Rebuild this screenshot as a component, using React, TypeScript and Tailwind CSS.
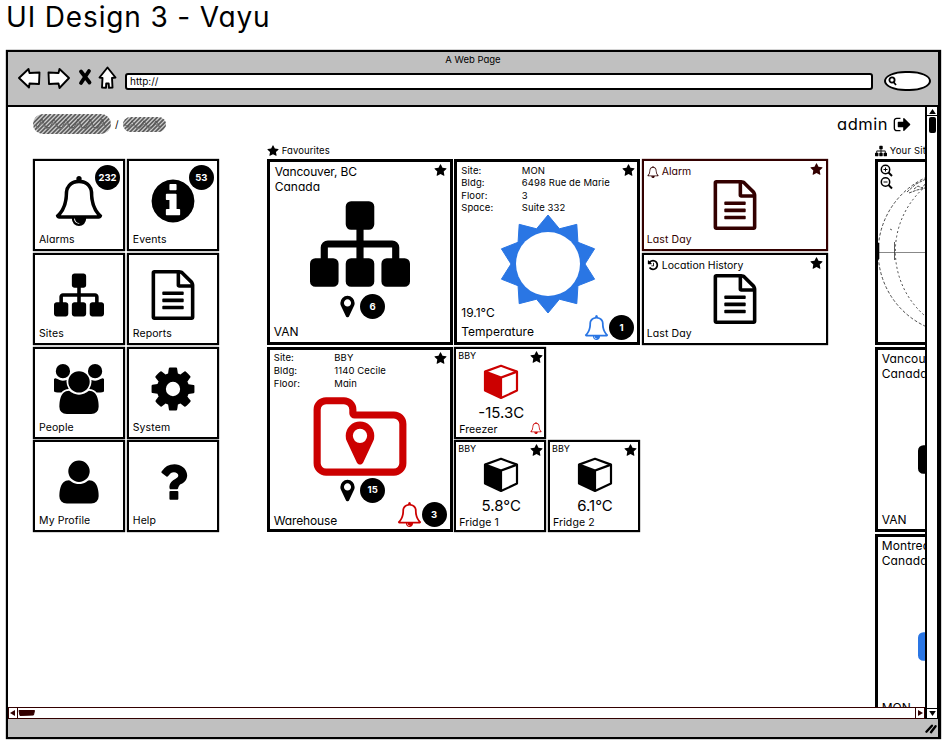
import React from "react";

const SITEMAP =
  "M1792 1248v320q0 40-28 68t-68 28h-320q-40 0-68-28t-28-68v-320q0-40 28-68t68-28h96v-192h-512v192h96q40 0 68 28t28 68v320q0 40-28 68t-68 28h-320q-40 0-68-28t-28-68v-320q0-40 28-68t68-28h96v-192h-512v192h96q40 0 68 28t28 68v320q0 40-28 68t-68 28h-320q-40 0-68-28t-28-68v-320q0-40 28-68t68-28h96v-192q0-52 38-90t90-38h512v-192h-96q-40 0-68-28t-28-68v-320q0-40 28-68t68-28h320q40 0 68 28t28 68v320q0 40-28 68t-68 28h-96v192h512q52 0 90 38t38 90v192h96q40 0 68 28t28 68z";
const INFO =
  "M1152 1376v-160q0-14-9-23t-23-9h-96v-512q0-14-9-23t-23-9h-320q-14 0-23 9t-9 23v160q0 14 9 23t23 9h96v320h-96q-14 0-23 9t-9 23v160q0 14 9 23t23 9h448q14 0 23-9t9-23zm-128-896v-160q0-14-9-23t-23-9h-192q-14 0-23 9t-9 23v160q0 14 9 23t23 9h192q14 0 23-9t9-23zm640 416q0 209-103 385.5t-279.5 279.5-385.5 103-385.5-103-279.5-279.5-103-385.5 103-385.5 279.5-279.5 385.5-103 385.5 103 279.5 279.5 103 385.5z";
const FILE =
  "M1596 380q28 28 48 76t20 88v1152q0 40-28 68t-68 28h-1344q-40 0-68-28t-28-68v-1600q0-40 28-68t68-28h896q40 0 88 20t76 48zm-444-244v376h376q-10-29-22-41l-313-313q-12-12-41-22zm384 1528v-1024h-416q-40 0-68-28t-28-68v-416h-768v1536h1280zm-1024-864q0-14 9-23t23-9h704q14 0 23 9t9 23v64q0 14-9 23t-23 9h-704q-14 0-23-9t-9-23v-64zm736 224q14 0 23 9t9 23v64q0 14-9 23t-23 9h-704q-14 0-23-9t-9-23v-64q0-14 9-23t23-9h704zm0 256q14 0 23 9t9 23v64q0 14-9 23t-23 9h-704q-14 0-23-9t-9-23v-64q0-14 9-23t23-9h704z";
const BELL =
  "M912 1696q0-16-16-16-59 0-101.5-42.5t-42.5-101.5q0-16-16-16t-16 16q0 73 51.5 124.5t124.5 51.5q16 0 16-16zm-666-288h1300q-266-300-266-832 0-51-24-105t-69-103-121.5-80.5-169.5-31.5-169.5 31.5-121.5 80.5-69 103-24 105q0 532-266 832zm1482 0q0 52-38 90t-90 38h-448q0 106-75 181t-181 75-181-75-75-181h-448q-52 0-90-38t-38-90q50-42 91-88t85-119.5 74.5-158.5 50-206 19.5-260q0-152 117-282.5t307-158.5q-8-19-8-39 0-40 28-68t68-28 68 28 28 68q0 20-8 39 190 28 307 158.5t117 282.5q0 139 19.5 260t50 206 74.5 158.5 85 119.5 91 88z";
const USERS =
  "M593 896q-162 5-265 128h-134q-82 0-138-40.5t-56-118.5q0-353 124-353 6 0 43.5 21t97.5 42.5 119 21.5q67 0 133-23-5 37-5 66 0 139 81 256zm1071 637q0 120-73 189.5t-194 69.5h-874q-121 0-194-69.5t-73-189.5q0-53 3.5-103.5t14-109 26.5-108.5 43-97.5 62-81 85.5-53.5 111.5-20q10 0 43 21.5t73 48 107 48 135 21.5 135-21.5 107-48 73-48 43-21.5q61 0 111.5 20t85.5 53.5 62 81 43 97.5 26.5 108.5 14 109 3.5 103.5zm-1024-1277q0 106-75 181t-181 75-181-75-75-181 75-181 181-75 181 75 75 181zm704 384q0 159-112.5 271.5t-271.5 112.5-271.5-112.5-112.5-271.5 112.5-271.5 271.5-112.5 271.5 112.5 112.5 271.5zm576 225q0 78-56 118.5t-138 40.5h-134q-103-123-265-128 81-117 81-256 0-29-5-66 66 23 133 23 59 0 119-21.5t97.5-42.5 43.5-21q124 0 124 353zm-128-609q0 106-75 181t-181 75-181-75-75-181 75-181 181-75 181 75 75 181z";
const USER =
  "M1600 1405q0 120-73 189.5t-194 69.5h-874q-121 0-194-69.5t-73-189.5q0-53 3.5-103.5t14-109 26.5-108.5 43-97.5 62-81 85.5-53.5 111.5-20q9 0 42 21.5t74.5 48 108 48 133.5 21.5 133.5-21.5 108-48 74.5-48 42-21.5q61 0 111.5 20t85.5 53.5 62 81 43 97.5 26.5 108.5 14 109 3.5 103.5zm-320-893q0 159-112.5 271.5t-271.5 112.5-271.5-112.5-112.5-271.5 112.5-271.5 271.5-112.5 271.5 112.5 112.5 271.5z";
const COG =
  "M1152 896q0-106-75-181t-181-75-181 75-75 181 75 181 181 75 181-75 75-181zm512-109v222q0 12-8 23t-20 13l-185 28q-19 54-39 91 35 50 107 138 10 12 10 25t-9 23q-27 37-99 108t-94 71q-12 0-26-9l-138-108q-44 23-91 38-16 136-29 186-7 28-36 28h-222q-14 0-24.5-8.5t-11.5-21.5l-28-184q-49-16-90-37l-141 107q-10 9-25 9-14 0-25-11-126-114-165-168-7-10-7-23 0-12 8-23 15-21 51-66.5t54-70.5q-27-50-41-99l-183-27q-13-2-21-12.5t-8-23.5v-222q0-12 8-23t19-13l186-28q14-46 39-92-40-57-107-138-10-12-10-24 0-10 9-23 26-36 98.5-107.5t94.5-71.5q13 0 26 10l138 107q44-23 91-38 16-136 29-186 7-28 36-28h222q14 0 24.5 8.5t11.5 21.5l28 184q49 16 90 37l142-107q9-9 24-9 13 0 25 10 129 119 165 170 7 8 7 22 0 12-8 23-15 21-51 66.5t-54 70.5q26 50 41 98l183 28q13 2 21 12.5t8 23.5z";
const QUESTION =
  "M1088 1256v240q0 16-12 28t-28 12h-240q-16 0-28-12t-12-28v-240q0-16 12-28t28-12h240q16 0 28 12t12 28zm316-600q0 54-15.5 101t-35 76.5-55 59.5-57.5 43.5-61 35.5q-41 23-68.5 65t-27.5 67q0 17-12 32.5t-28 15.5h-240q-15 0-25.5-18.5t-10.5-37.5v-45q0-83 65-156.5t143-108.5q59-27 84-56t25-76q0-42-46.5-74t-107.5-32q-65 0-108 29-35 25-107 115-13 16-31 16-12 0-25-8l-164-125q-13-10-15.5-25t5.5-28q160-266 464-266 80 0 161 31t146 83 106 127.5 41 158.5z";
const MARKER =
  "M1152 640q0-106-75-181t-181-75-181 75-75 181 75 181 181 75 181-75 75-181zm256 0q0 109-33 179l-364 774q-16 33-47.5 52t-67.5 19-67.5-19-46.5-52l-365-774q-33-70-33-179 0-212 150-362t362-150 362 150 150 362z";
const STAR =
  "M1728 647q0 22-26 48l-363 354 86 500q1 7 1 20 0 21-10.5 35.5t-30.5 14.5q-19 0-40-12l-449-236-449 236q-22 12-40 12-21 0-31.5-14.5t-10.5-35.5q0-6 2-20l86-500-364-354q-25-27-25-48 0-37 56-46l502-73 225-455q19-41 49-41t49 41l225 455 502 73q56 9 56 46z";
const FOLDER =
  "M1600 1312v-704q0-40-28-68t-68-28h-704q-40 0-68-28t-28-68v-64q0-40-28-68t-68-28h-320q-40 0-68 28t-28 68v960q0 40 28 68t68 28h1216q40 0 68-28t28-68zm128-704v704q0 92-66 158t-158 66h-1216q-92 0-158-66t-66-158v-960q0-92 66-158t158-66h320q92 0 158 66t66 158v32h672q92 0 158 66t66 158z";
const SIGNOUT =
  "M704 1440q0 4 1 20t.5 26.5-3 23.5-10 19.5-20.5 6.5h-320q-119 0-203.5-84.5t-84.5-203.5v-704q0-119 84.5-203.5t203.5-84.5h320q13 0 22.5 9.5t9.5 22.5q0 4 1 20t.5 26.5-3 23.5-10 19.5-20.5 6.5h-320q-66 0-113 47t-47 113v704q0 66 47 113t113 47h312l11.5 1 11.5 3 8 5.5 7 9 2 13.5zm928-544q0 26-19 45l-544 544q-19 19-45 19t-45-19-19-45v-288h-448q-26 0-45-19t-19-45v-384q0-26 19-45t45-19h448v-288q0-26 19-45t45-19 45 19l544 544q19 19 19 45z";
const HISTORY =
  "M1664 896q0 156-61 298t-164 245-245 164-298 61q-172 0-327-72.5t-264-204.5q-7-10-6.5-22.5t8.5-20.5l137-138q10-9 25-9 16 2 23 12 73 95 179 147t225 52q104 0 198.5-40.5t163.5-109.5 109.5-163.5 40.5-198.5-40.5-198.5-109.5-163.5-163.5-109.5-198.5-40.5q-98 0-188 35.5t-160 101.5l137 138q31 30 14 69-17 40-59 40h-448q-26 0-45-19t-19-45v-448q0-42 40-59 39-17 69 14l130 129q107-101 244.5-156.5t284.5-55.5q156 0 298 61t245 164 164 245 61 298zm-640-288v448q0 14-9 23t-23 9h-320q-14 0-23-9t-9-23v-64q0-14 9-23t23-9h224v-352q0-14 9-23t23-9h64q14 0 23 9t9 23z";

function Icon({ d, className, box = "0 0 1792 1792" }: { d: string; className: string; box?: string }) {
  return (
    <svg viewBox={box} className={`shrink-0 ${className}`} fill="currentColor">
      <path d={d} />
    </svg>
  );
}

function Badge({ children, className = "" }: { children: React.ReactNode; className?: string }) {
  return (
    <span
      className={`flex size-[25px] shrink-0 items-center justify-center rounded-full bg-black text-[9.5px] leading-none font-bold text-white ${className}`}
    >
      {children}
    </span>
  );
}

function CornerStar({ className = "top-[2px] right-[3px]" }: { className?: string }) {
  return <Icon d={STAR} className={`absolute size-[13px] ${className}`} />;
}

function MenuTile({ d, label, badge, box }: { d: string; label: string; badge?: string; box?: string }) {
  return (
    <button className="relative flex flex-col items-center border-[2px] border-black pt-[15px] shadow-[0_0_1px_#000]">
      <Icon d={d} box={box} className="size-[50px]" />
      <span className="mt-[6px] w-full pl-[4px] text-left text-[10.5px] leading-[16px] tracking-[0.1px]">{label}</span>
      {badge && <Badge className="absolute top-[4px] right-[3px]">{badge}</Badge>}
    </button>
  );
}

function Cube() {
  return (
    <svg viewBox="0 0 36 36" className="h-[36px] w-[36px]" fill="none" stroke="currentColor">
      <path d="M18 1.800 34 7.600v19L18 34 2 26.600V7.600Z" strokeWidth="2.200" strokeLinejoin="round" />
      <path d="M2 7.600 18 13.600 34 7.600M18 13.600V34" strokeWidth="2.200" />
      <path d="M2 7.600 18 13.600V34L2 26.600Z" fill="currentColor" stroke="none" />
    </svg>
  );
}

function FridgeTile({
  label,
  value,
  cube = "text-black",
  alarm,
  className = "",
}: {
  label: string;
  value: string;
  cube?: string;
  alarm?: boolean;
  className?: string;
}) {
  return (
    <article className={`relative flex flex-col items-center border-[2px] border-black shadow-[0_0_1px_#000] ${className}`}>
      <span className="mt-px w-full pl-[2px] text-[9px] leading-[12px]">BBY</span>
      <div className={`mt-[2px] ml-[2px] ${cube}`}>
        <Cube />
      </div>
      <span className="mt-[4px] ml-[2px] text-[15px] leading-[18px]">{value}</span>
      <span className="mt-px w-full pl-[3px] text-[10.5px] leading-[14px] tracking-[0.1px]">{label}</span>
      {alarm && <Icon d={BELL} className="absolute right-[2px] bottom-[3px] size-[12px] text-[#c00]" />}
      <CornerStar className="top-[2px] right-[1px]" />
    </article>
  );
}

function Details({ rows, pitch }: { rows: string[][]; pitch: string }) {
  return (
    <dl className={`text-[9.5px] tracking-[0.1px] ${pitch}`}>
      {rows.map(([k, v]) => (
        <div key={k} className="flex">
          <dt className="w-[60.500px]">{k}</dt>
          <dd>{v}</dd>
        </div>
      ))}
    </dl>
  );
}

function ReportTile({ title, d, color }: { title: string; d: string; color: string }) {
  return (
    <article className={`relative col-span-2 border-[2px] shadow-[0_0_1px_currentColor] ${color}`}>
      <header className="flex items-center gap-[3px] pt-[3px] pl-[3px] text-[10.500px] leading-[15px]">
        <Icon d={d} className="size-[12px]" />
        {title}
      </header>
      <div className="mt-px flex justify-center">
        <Icon d={FILE} className="size-[50px]" />
      </div>
      <span className="absolute bottom-[1px] left-[3px] text-[10.500px] leading-[16px] tracking-[0.1px]">Last Day</span>
      <CornerStar />
    </article>
  );
}

function Sun() {
  const pts = Array.from({ length: 20 }, (_, i) => {
    const a = (i * Math.PI) / 10;
    const r = i % 2 ? 37 : 49;
    return `${50 + r * Math.sin(a)},${50 - r * Math.cos(a)}`;
  }).join(" ");
  return (
    <svg viewBox="0 0 100 100" className="ml-px size-[100px]">
      <polygon points={pts} fill="#2a76e4" stroke="#2a76e4" strokeWidth="1" strokeLinejoin="round" />
      <circle cx="50" cy="50" r="32" fill="#fff" />
    </svg>
  );
}

function NavIcons() {
  return (
    <svg viewBox="17.500 66 102 24" className="h-[24px] w-[102px]" fill="#fff" stroke="#000" strokeWidth="1.900" strokeLinejoin="round">
      <path d="M18.500 78 28 69l1 4 10-.5-.5 11.500-9.500-.5-.5 4Z" />
      <path d="M68.500 78 59 69l-1 4-10-.5.5 11.500L58 83.500l1 4.500Z" />
      <path d="M80.500 71.500 89 82.500M88.500 71 80.500 83" strokeWidth="3.800" strokeLinecap="round" />
      <path d="M107 67.500 115 77.500l-3.500.5.5 9.500-3.500.3-.3-4.300h-2.500l-.2 4.300-4-.3.5-9.500-3-.5Z" />
    </svg>
  );
}

function Scribble({ w, h }: { w: number; h: number }) {
  const n = Math.ceil((w + h) / 4.2);
  const mid = h / 2;
  const zig = (dy: number, amp: number) => {
    let p = `M2 ${mid}`;
    for (let x = 5; x < w - 2; x += 4) p += ` L${x} ${mid + dy + (x % 3 === 0 ? -amp : amp * 0.7)}`;
    return p;
  };
  return (
    <svg viewBox={`0 0 ${w} ${h}`} width={w} height={h} className="shrink-0 rounded-full bg-[#cfcfcf]">
      {Array.from({ length: n }, (_, i) => (
        <path key={i} d={`M${i * 4.2 - h} ${h + 1}L${i * 4.2 + 1} 0`} stroke="#5a5a5a" strokeWidth="1.700" />
      ))}
      <path d={zig(0, h / 4)} fill="none" stroke="#555" strokeWidth=".9" />
      <path d={zig(2, h / 6)} fill="none" stroke="#777" strokeWidth=".9" />
    </svg>
  );
}

function MapTile() {
  return (
    <div className="h-[185.750px] w-[185.750px] border-[3px] border-black">
      <svg viewBox="878 162 180 180" className="size-[180px]" fill="none" stroke="#333">
        <path d="M878 252.500H1058" stroke="#888" strokeWidth="1" />
        <path d="M927 177A82 82 0 0 0 927 327" strokeDasharray="3 2" strokeWidth=".9" />
        <path d="M926 186A85 85 0 0 0 924 315" strokeDasharray="2 2.500" strokeWidth=".9" />
        <path d="M894.500 242v18M890 229l2 1" strokeWidth=".8" />
        <path d="m907 192 9-8 10-5M909 193l8-3 9-2M914 189l4-3 4 2 4-5" strokeDasharray="3 1" strokeWidth=".9" />
        <path d="M878.500 243v16" stroke="#000" strokeWidth="1.600" />
        <g stroke="#000" strokeWidth="1.500">
          <circle cx="885.500" cy="169.500" r="4.200" />
          <path d="m888.500 172.500 3.500 3.500" strokeWidth="2" />
          <path d="M883.500 169.500h4M885.500 167.500v4" strokeWidth="1" />
          <circle cx="885.500" cy="182" r="4.200" />
          <path d="m888.500 185 3.500 3.500" strokeWidth="2" />
          <path d="M883.500 182h4" strokeWidth="1" />
        </g>
      </svg>
    </div>
  );
}

function SiteCard({ city, code, color }: { city: string; code: string; color: string }) {
  return (
    <div className="flex h-[185.750px] w-[185.750px] flex-col border-[3px] border-black px-[4px]">
      <p className="mt-px text-[12px] leading-[15px] tracking-[0.1px] whitespace-nowrap">
        {city}
        <br />
        Canada
      </p>
      <Icon d={SITEMAP} className={`size-[100px] self-center ${color}`} />
      <span className="mt-auto mb-px text-[12px] leading-[16px]">{code}</span>
    </div>
  );
}

export default function App() {
  return (
    <div className="flex h-[745px] w-[946px] flex-col overflow-hidden bg-white font-[Inter,sans-serif] text-black [font-feature-settings:'cv11']">
      <h1 className="h-[50px] pl-[6px] text-[28px] leading-[35px] tracking-[0.85px] whitespace-nowrap">UI Design 3 - Vayu</h1>

      <div className="ml-[6px] flex h-[689px] w-[935px] flex-col border-[2.500px] border-r-[3px] border-black bg-[#c0c0c0] shadow-[0_0_1px_#000]">
        <div className="h-[55px] shrink-0 border-b-[2.500px] border-black">
          <p className="pt-px text-center text-[9.500px] leading-[14px]">A Web Page</p>
          <div className="-mt-px flex items-start pl-[10px]">
            <NavIcons />
            <div className="mt-[7px] ml-[5px] h-[17px] w-[748px] rounded-[3px] border-2 border-black bg-white pl-[3px] text-[10px] leading-[12px]">
              http://
            </div>
            <div className="mt-[5px] ml-[11px] flex h-[20px] w-[47px] items-center rounded-[50%/55%] border-2 border-black bg-white pl-[2px]">
              <svg viewBox="0 0 9 10" className="h-[10px] w-[9px]" fill="none" stroke="#000" strokeWidth="1.800">
                <circle cx="4" cy="4" r="2.600" />
                <path d="m5.500 6 2.500 3" />
              </svg>
            </div>
          </div>
        </div>

        <div className="flex min-h-0 flex-1 bg-white">
          <main className="flex min-w-0 flex-1 flex-col overflow-hidden">
            <div className="flex h-[600px] shrink-0 flex-col overflow-hidden">
              <div className="flex h-[34px] shrink-0 items-center pl-[25px]">
                <Scribble w={78} h={20} />
                <span className="mx-[4px] text-[10px]">/</span>
                <Scribble w={43} h={15} />
                <span className="ml-auto text-[16.500px] tracking-[0.5px]">admin</span>
                <Icon d={SIGNOUT} className="mr-[13px] ml-[5px] size-[19px]" />
              </div>

              <div className="flex pt-[2px]">
                <nav className="mt-[16px] ml-[25px] grid shrink-0 grid-cols-[92px_92px] grid-rows-[repeat(4,92px)] gap-[1.750px]">
                  <MenuTile d={BELL} label="Alarms" badge="232" />
                  <MenuTile d={INFO} label="Events" badge="53" />
                  <MenuTile d={SITEMAP} label="Sites" />
                  <MenuTile d={FILE} label="Reports" />
                  <MenuTile d={USERS} label="People" box="64 0 1792 1792" />
                  <MenuTile d={COG} label="System" />
                  <MenuTile d={USER} label="My Profile" />
                  <MenuTile d={QUESTION} label="Help" />
                </nav>

                <section className="ml-[48px] w-[608px] shrink-0">
                  <h2 className="flex h-[16px] items-center gap-[3px] text-[9.500px] tracking-[0.1px]">
                    <Icon d={STAR} className="size-[12px]" />
                    Favourites
                  </h2>
                  <div className="grid grid-cols-[repeat(6,92px)] grid-rows-[repeat(4,92px)] gap-[1.750px]">
                    <article className="relative col-span-2 row-span-2 flex flex-col items-center border-[3px] border-black">
                      <p className="mt-[2px] w-full pl-[5px] text-[12px] leading-[15px] tracking-[-0.15px]">
                        Vancouver, BC
                        <br />
                        <span className="tracking-normal">Canada</span>
                      </p>
                      <Icon d={SITEMAP} className="size-[100px]" />
                      <div className="ml-px flex items-center">
                        <Icon d={MARKER} className="size-[25px]" />
                        <Badge>6</Badge>
                      </div>
                      <span className="w-full pl-[4px] text-[12px] leading-[26px]">VAN</span>
                      <CornerStar />
                    </article>

                    <article className="relative col-span-2 row-span-2 flex flex-col items-center border-[3px] border-black">
                      <div className="mt-[3px] w-full pl-[4px]">
                        <Details
                          pitch="leading-[12.300px]"
                          rows={[
                            ["Site:", "MON"],
                            ["Bldg:", "6498 Rue de Marie"],
                            ["Floor:", "3"],
                            ["Space:", "Suite 332"],
                          ]}
                        />
                      </div>
                      <Sun />
                      <p className="-mt-[11px] w-full pl-[4px] text-[12px] leading-[19px]">
                        19.1°C
                        <br />
                        Temperature
                      </p>
                      <div className="absolute right-[3px] bottom-[2px] flex items-center text-[#2a76e4]">
                        <Icon d={BELL} className="size-[25px]" />
                        <Badge>1</Badge>
                      </div>
                      <CornerStar className="top-[2px] right-[2px]" />
                    </article>

                    <ReportTile title="Alarm" d={BELL} color="border-[#300] text-[#300]" />
                    <ReportTile title="Location History" d={HISTORY} color="border-black text-black" />

                    <article className="relative col-span-2 row-span-2 flex flex-col items-center border-[3px] border-black">
                      <div className="mt-px w-full pl-[4px]">
                        <Details
                          pitch="leading-[13px]"
                          rows={[
                            ["Site:", "BBY"],
                            ["Bldg:", "1140 Cecile"],
                            ["Floor:", "Main"],
                          ]}
                        />
                      </div>
                      <div className="grid place-items-center text-[#c00]">
                        <Icon d={FOLDER} className="col-start-1 row-start-1 size-[100px]" />
                        <Icon d={MARKER} className="col-start-1 row-start-1 mt-[6px] size-[50px]" />
                      </div>
                      <div className="-mt-[12px] ml-px flex items-center">
                        <Icon d={MARKER} className="size-[25px]" />
                        <Badge>15</Badge>
                      </div>
                      <span className="mt-[9px] w-full pl-[4px] text-[12px] leading-[18px] tracking-[-0.15px]">Warehouse</span>
                      <div className="absolute right-[3px] bottom-[2px] flex items-center text-[#c00]">
                        <Icon d={BELL} className="size-[25px]" />
                        <Badge>3</Badge>
                      </div>
                      <CornerStar />
                    </article>

                    <FridgeTile label="Freezer" value="-15.3C" cube="text-[#c00]" alarm />
                    <FridgeTile label="Fridge 1" value="5.8°C" className="col-start-3 row-start-4" />
                    <FridgeTile label="Fridge 2" value="6.1°C" className="col-start-4 row-start-4" />
                  </div>
                </section>

                <section className="shrink-0">
                  <h2 className="flex h-[16px] items-center gap-[3px] text-[9.500px] tracking-[0.2px] whitespace-nowrap">
                    <Icon d={SITEMAP} className="size-[12px]" />
                    Your Sites
                  </h2>
                  <div className="flex flex-col gap-[1.750px]">
                    <MapTile />
                    <SiteCard city="Vancouver, BC" code="VAN" color="text-black" />
                    <SiteCard city="Montreal, QC" code="MON" color="text-[#2a76e4]" />
                  </div>
                </section>
              </div>
            </div>

            <div className="mt-auto flex h-[12px] shrink-0 items-stretch border-[1.500px] border-[#300] text-[#300]">
              <div className="flex w-[9px] items-center justify-center border-r border-[#300]">
                <svg viewBox="0 0 6 6" className="size-[6px]">
                  <path d="M5 0v6L0 3Z" fill="currentColor" />
                </svg>
              </div>
              <svg viewBox="0 0 18 8" className="mt-[1px] h-[8px] w-[18px]">
                <path d="M1 1.500 16.500 1.500 15.500 6 2 6.500Z" fill="currentColor" stroke="currentColor" strokeLinejoin="round" />
              </svg>
              <div className="ml-auto flex w-[9px] items-center justify-center border-l border-[#300]">
                <svg viewBox="0 0 6 6" className="size-[6px]">
                  <path d="M1 0v6L6 3Z" fill="currentColor" />
                </svg>
              </div>
            </div>
          </main>

          <aside className="flex w-[13px] shrink-0 flex-col border-r-[1.500px] border-l-2 border-black">
            <div className="flex h-[9px] items-center justify-center border-b border-black">
              <svg viewBox="0 0 8 6" className="h-[5px] w-[7px]">
                <path d="M4 0 8 6H0Z" />
              </svg>
            </div>
            <div className="mx-auto mt-px h-[16px] w-[7px] rounded-[2px] bg-black" />
            <div className="mt-auto flex h-[11px] items-center justify-center border-y border-black">
              <svg viewBox="0 0 8 6" className="h-[5px] w-[7px]">
                <path d="M4 6 8 0H0Z" />
              </svg>
            </div>
          </aside>
        </div>

        <footer className="flex h-[18px] shrink-0 items-center justify-end">
          <svg viewBox="0 0 14 12" className="h-[11px] w-[14px]" stroke="#000" strokeWidth="2.600" strokeLinecap="round">
            <path d="M2 9.500 8 3M7 10l5-6.500" />
          </svg>
        </footer>
      </div>
    </div>
  );
}
